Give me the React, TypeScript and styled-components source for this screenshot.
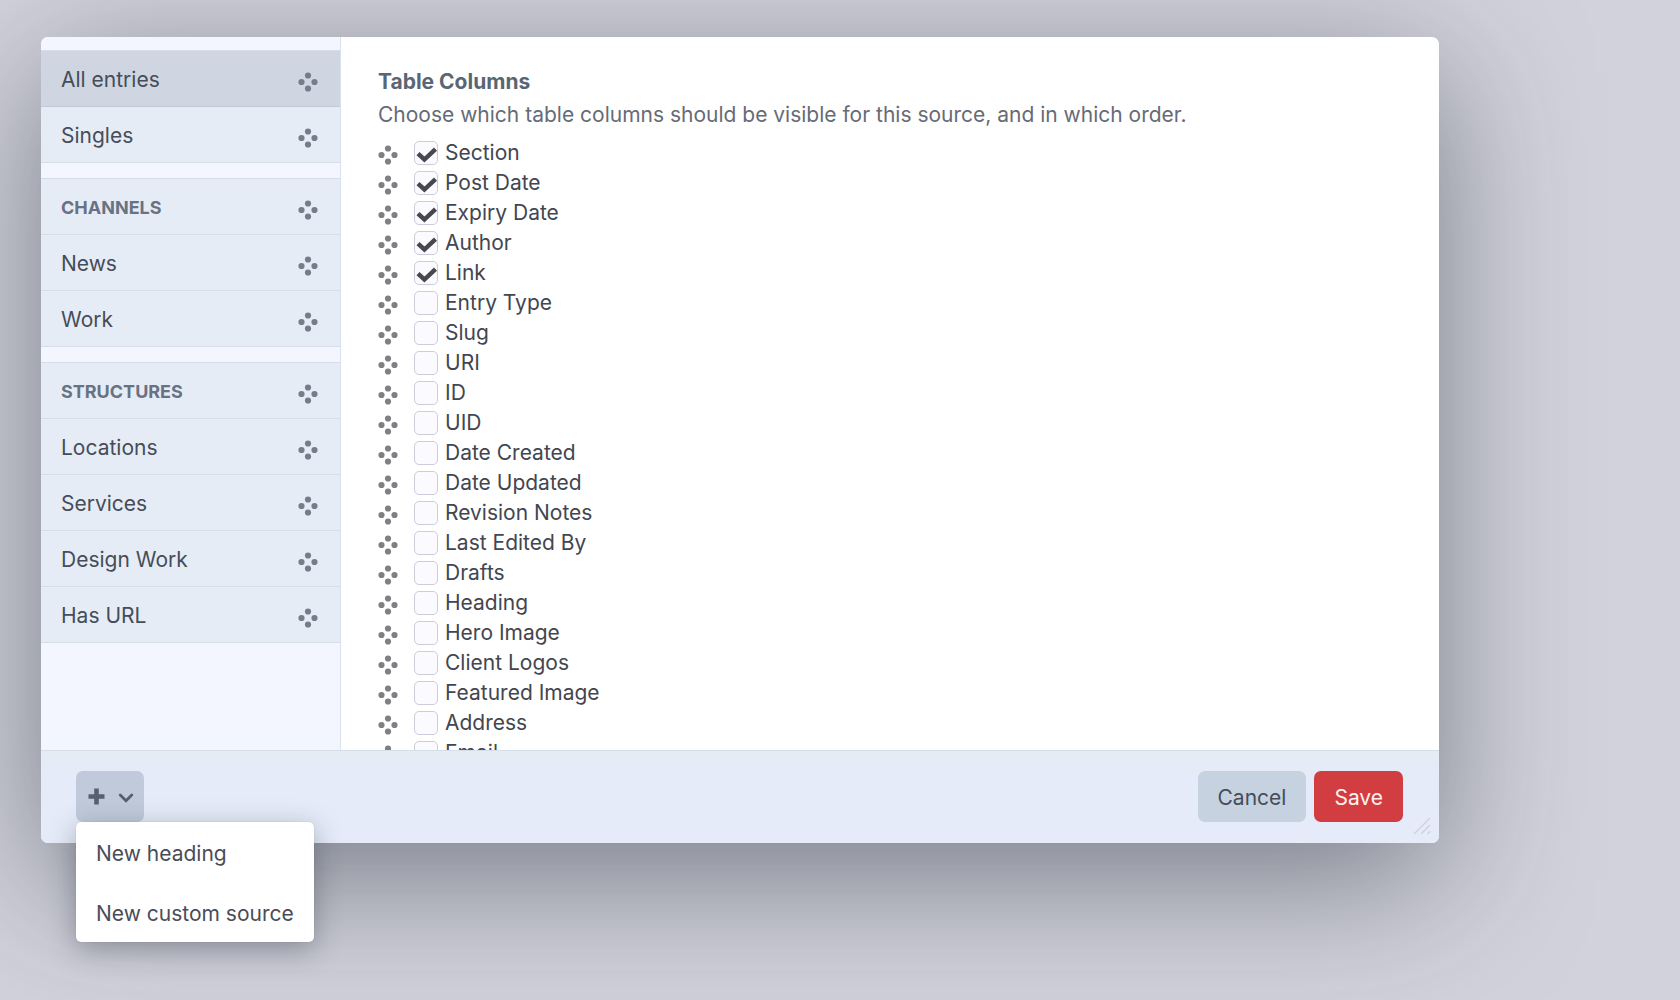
import { useState } from "react";
import styled, { createGlobalStyle } from "styled-components";

const GlobalStyle = createGlobalStyle`
  *, *::before, *::after { box-sizing: border-box; }
  body {
    margin: 0;
    background: #d2d2dc;
    color: #43464f;
    font-family: Inter, "Liberation Sans", sans-serif;
    font-size: 21px;
    line-height: 30px;
  }
  button, input { font: inherit; color: inherit; }
  ul { list-style: none; margin: 0; padding: 0; }
`;

const Page = styled.main`
  height: 100vh;
  min-height: 600px;
  padding: 37px 241px 157px 41px;
  overflow: hidden;
`;

const Modal = styled.section`
  display: flex;
  flex-direction: column;
  height: 100%;
  border-radius: 7px;
  background: #fff;
  box-shadow: 0 36px 140px rgba(31, 41, 51, 0.5);
`;

const Body = styled.div`
  display: flex;
  flex: 1;
  min-height: 0;
`;

const Sidebar = styled.nav`
  flex: 0 0 300px;
  display: flex;
  flex-direction: column;
  gap: 15px;
  padding-top: 13px;
  border-right: 1px solid #dbe1ee;
  border-top-left-radius: 7px;
  background: #f3f6fe;
  overflow: hidden;
`;

const Group = styled.ul`
  border-top: 1px solid #d6dde8;
`;

const SourceItem = styled.li<{ $selected?: boolean }>`
  display: flex;
  align-items: center;
  height: 56px;
  padding-right: 22px;
  border-bottom: 1px solid ${(p) => (p.$selected ? "#c3cad7" : "#d6dde8")};
  background: ${(p) => (p.$selected ? "#cfd6e2" : "#e5ecf6")};
`;

const SourceButton = styled.button<{ $heading?: boolean }>`
  flex: 1;
  height: 100%;
  padding: 2px 0 0 20px;
  border: 0;
  background: none;
  text-align: left;
  cursor: pointer;
  color: ${(p) => (p.$heading ? "#697282" : "#454d59")};
  font-size: ${(p) => (p.$heading ? "18px" : "21px")};
  font-weight: ${(p) => (p.$heading ? 700 : 400)};
  text-transform: ${(p) => (p.$heading ? "uppercase" : "none")};
`;

const Handle = styled.svg<{ $muted?: boolean }>`
  flex: none;
  width: 20px;
  height: 20px;
  margin-top: ${(p) => (p.$muted ? "6px" : "4px")};
  fill: ${(p) => (p.$muted ? "#747d8b" : "#808084")};
`;

const Content = styled.div`
  flex: 1;
  min-width: 0;
  padding: 29px 37px 0;
  overflow: hidden;
`;

const Title = styled.h2`
  margin: 0;
  color: #596673;
  font-size: 21px;
  line-height: 32px;
  font-weight: 700;
`;

const Description = styled.p`
  margin: 0 0 6px;
  color: #666b76;
  line-height: 34px;
`;

const ColumnRow = styled.li`
  display: flex;
  align-items: center;
  gap: 16px;
  height: 30px;
`;

const ColumnLabel = styled.label`
  display: flex;
  align-items: center;
  gap: 7px;
  cursor: pointer;
`;

const BoxCell = styled.span`
  display: grid;
  width: 24px;
  height: 24px;
  > * { grid-area: 1 / 1; }
`;

const Checkbox = styled.input`
  appearance: none;
  width: 24px;
  height: 24px;
  margin: 0;
  border: 1px solid #cdccda;
  border-radius: 5px;
  background: #fbfaff;
`;

const CheckMark = styled.svg`
  width: 24px;
  height: 24px;
  fill: none;
  stroke: #46474f;
  stroke-width: 4.4;
  pointer-events: none;
`;

const Footer = styled.footer`
  display: flex;
  justify-content: space-between;
  padding: 20px 36px 21px 35px;
  border-top: 1px solid #d7dee9;
  border-radius: 0 0 7px 7px;
  background: linear-gradient(#e5ecf4, #e5ebf9 30px);
  position: relative;
`;

const Actions = styled.div`
  display: flex;
  gap: 8px;
`;

const Button = styled.button<{ $primary?: boolean }>`
  height: 51px;
  padding: 2px 20px 0;
  border: 0;
  border-radius: 7px;
  cursor: pointer;
  background: ${(p) => (p.$primary ? "#d23d42" : "#c7d2e0")};
  color: ${(p) => (p.$primary ? "#fdf1ee" : "#454d5b")};
`;

const MenuAnchor = styled.div`
  position: relative;
`;

const AddButton = styled.button`
  display: flex;
  align-items: center;
  justify-content: space-between;
  width: 68px;
  height: 51px;
  padding: 0 10px 0 12px;
  border: 0;
  border-radius: 7px;
  background: #c0cada;
  cursor: pointer;
  svg { fill: none; stroke: #566070; }
`;

const Menu = styled.ul`
  position: absolute;
  top: 100%;
  left: 0;
  z-index: 1;
  border-radius: 5px;
  background: #fff;
  box-shadow: 0 7px 28px rgba(31, 41, 51, 0.35), 0 0 1px rgba(31, 41, 51, 0.3);
`;

const MenuButton = styled.button`
  display: block;
  width: 100%;
  height: 60px;
  padding: 3px 20px 0;
  border: 0;
  background: none;
  color: #4a4d57;
  text-align: left;
  white-space: nowrap;
  cursor: pointer;
`;

const Resizer = styled.svg`
  position: absolute;
  right: 8px;
  bottom: 8px;
  width: 18px;
  height: 18px;
  fill: none;
  stroke: #cdd1da;
  stroke-width: 1.2;
`;

function MoveIcon({ muted }: { muted?: boolean }) {
  return (
    <Handle $muted={muted} viewBox="0 0 20 20" aria-hidden="true">
      <circle cx="10" cy="3.5" r="3.1" />
      <circle cx="3.5" cy="10" r="3.1" />
      <circle cx="16.5" cy="10" r="3.1" />
      <circle cx="10" cy="16.5" r="3.1" />
    </Handle>
  );
}

type Source = { name: string; heading?: boolean };

const groups: Source[][] = [
  [{ name: "All entries" }, { name: "Singles" }],
  [{ name: "Channels", heading: true }, { name: "News" }, { name: "Work" }],
  [
    { name: "Structures", heading: true },
    { name: "Locations" },
    { name: "Services" },
    { name: "Design Work" },
    { name: "Has URL" },
  ],
];

const columns = [
  "Section", "Post Date", "Expiry Date", "Author", "Link", "Entry Type", "Slug",
  "URI", "ID", "UID", "Date Created", "Date Updated", "Revision Notes",
  "Last Edited By", "Drafts", "Heading", "Hero Image", "Client Logos",
  "Featured Image", "Address", "Email",
];

export default function App() {
  const [selected, setSelected] = useState("All entries");
  const [menuOpen, setMenuOpen] = useState(true);

  return (
    <Page>
      <GlobalStyle />
      <Modal role="dialog" aria-label="Customize sources">
        <Body>
          <Sidebar aria-label="Sources">
            {groups.map((group) => (
              <Group key={group[0].name}>
                {group.map((s) => (
                  <SourceItem key={s.name} $selected={s.name === selected}>
                    <SourceButton $heading={s.heading} onClick={() => setSelected(s.name)}>
                      {s.name}
                    </SourceButton>
                    <MoveIcon muted />
                  </SourceItem>
                ))}
              </Group>
            ))}
          </Sidebar>
          <Content>
            <Title>Table Columns</Title>
            <Description>
              Choose which table columns should be visible for this source, and in which order.
            </Description>
            <ul>
              {columns.map((name, i) => (
                <ColumnRow key={name}>
                  <MoveIcon />
                  <ColumnLabel>
                    <ColumnCheck defaultOn={i < 5} />
                    {name}
                  </ColumnLabel>
                </ColumnRow>
              ))}
            </ul>
          </Content>
        </Body>
        <Footer>
          <MenuAnchor>
            <AddButton
              aria-label="Add a source"
              aria-expanded={menuOpen}
              onClick={() => setMenuOpen(!menuOpen)}
            >
              <svg width="17" height="17" viewBox="0 0 17 17" strokeWidth="4.6" strokeLinecap="butt">
                <path d="M8.5 0.5v16M0.5 8.5h16" />
              </svg>
              <svg width="16" height="16" viewBox="0 0 16 16" strokeWidth="2.8">
                <path d="M2.2 6 8 11.7 13.8 6" strokeLinecap="round" />
              </svg>
            </AddButton>
            {menuOpen && (
              <Menu>
                <li><MenuButton>New heading</MenuButton></li>
                <li><MenuButton>New custom source</MenuButton></li>
              </Menu>
            )}
          </MenuAnchor>
          <Actions>
            <Button>Cancel</Button>
            <Button $primary>Save</Button>
          </Actions>
          <Resizer viewBox="0 0 18 18" aria-hidden="true">
            <path d="M1 17 17 1M8 17l9-9M14.5 17l2.5-2.5" />
          </Resizer>
        </Footer>
      </Modal>
    </Page>
  );
}

function ColumnCheck({ defaultOn }: { defaultOn: boolean }) {
  const [on, setOn] = useState(defaultOn);
  return (
    <BoxCell>
      <Checkbox type="checkbox" checked={on} onChange={(e) => setOn(e.target.checked)} />
      {on && (
        <CheckMark viewBox="0 0 24 24" aria-hidden="true">
          <path d="M4 12.7 10.4 18.5 21.5 8.2" />
        </CheckMark>
      )}
    </BoxCell>
  );
}
